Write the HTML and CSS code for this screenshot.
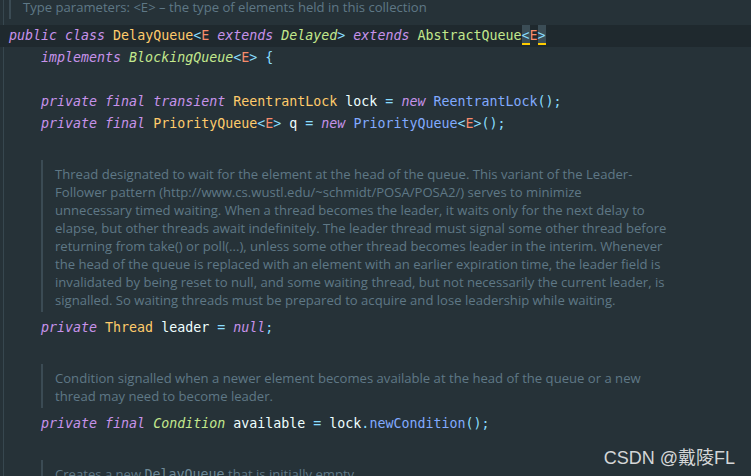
FILE: index.html
```html
<!DOCTYPE html>
<html>
<head>
	<title>DelayQueue.java</title>
	<meta charset="utf-8">
	<link rel="stylesheet" href="styles.css">
</head>
<body>
	<div class="editor">
		<!-- type parameter doc -->
		<div class="doc top">Type parameters: &lt;E&gt; – the type of elements held in this collection</div>

		<div class="line current"><span class="kw">public</span> <span class="kw">class</span> <span class="ty">DelayQueue</span><span class="pu">&lt;</span><span class="tp">E</span> <span class="kw">extends</span> <span class="ifc">Delayed</span><span class="pu">&gt;</span> <span class="kw">extends</span> <span class="cls">AbstractQueue</span><span class="pu match">&lt;</span><span class="tp">E</span><span class="pu match">&gt;</span></div>
		<div class="line">    <span class="kw">implements</span> <span class="ifc">BlockingQueue</span><span class="pu">&lt;</span><span class="tp">E</span><span class="pu">&gt;</span> <span class="pu">{</span></div>
		<div class="line"></div>
		<div class="line">    <span class="kw">private</span> <span class="kw">final</span> <span class="kw">transient</span> <span class="ty">ReentrantLock</span> <span class="id">lock</span> <span class="pu">=</span> <span class="kw">new</span> <span class="fn">ReentrantLock</span><span class="pu">();</span></div>
		<div class="line">    <span class="kw">private</span> <span class="kw">final</span> <span class="ty">PriorityQueue</span><span class="pu">&lt;</span><span class="tp">E</span><span class="pu">&gt;</span> <span class="id">q</span> <span class="pu">=</span> <span class="kw">new</span> <span class="fn">PriorityQueue</span><span class="pu">&lt;</span><span class="tp">E</span><span class="pu">&gt;();</span></div>

		<div class="doc">Thread designated to wait for the element at the head of the queue. This variant of the Leader-<br>
			Follower pattern (http://www.cs.wustl.edu/~schmidt/POSA/POSA2/) serves to minimize<br>
			unnecessary timed waiting. When a thread becomes the leader, it waits only for the next delay to<br>
			elapse, but other threads await indefinitely. The leader thread must signal some other thread before<br>
			returning from take() or poll(...), unless some other thread becomes leader in the interim. Whenever<br>
			the head of the queue is replaced with an element with an earlier expiration time, the leader field is<br>
			invalidated by being reset to null, and some waiting thread, but not necessarily the current leader, is<br>
			signalled. So waiting threads must be prepared to acquire and lose leadership while waiting.</div>
		<div class="line">    <span class="kw">private</span> <span class="ty">Thread</span> <span class="id">leader</span> <span class="pu">=</span> <span class="kw">null</span><span class="pu">;</span></div>

		<div class="doc">Condition signalled when a newer element becomes available at the head of the queue or a new<br>
			thread may need to become leader.</div>
		<div class="line">    <span class="kw">private</span> <span class="kw">final</span> <span class="ifc">Condition</span> <span class="id">available</span> <span class="pu">=</span> <span class="id">lock</span><span class="pu">.</span><span class="fn">newCondition</span><span class="pu">();</span></div>

		<div class="doc">Creates a new <code>DelayQueue</code> that is initially empty.</div>
	</div>

	<div class="watermark">CSDN @戴陵FL</div>
</body>
</html>
```

FILE: styles.css
```css
/* Editor background */
body {
  margin: 0;
  background-color: #263238;
  height: 476px;
  overflow: hidden;
  position: relative;
}

.editor {
  border-left: 1px solid #37474f;
  margin-left: 3px;
  min-height: 476px;
}

/* Code lines */
.line {
  height: 22px;
  line-height: 22px;
  padding-left: 5px;
  white-space: pre;
  font-family: "DejaVu Sans Mono", monospace;
  font-size: 13.3px;
  color: #eeffff;
}

.current {
  background-color: #1f292e;
  margin-left: -4px;
  padding-left: 9px;
}

.kw  { color: #c792ea; font-style: italic; }
.ty  { color: #ffcb6b; }
.tp  { color: #f78c6c; }
.pu  { color: #89ddff; }
.ifc { color: #c3e88d; font-style: italic; }
.cls { color: #c3e88d; }
.fn  { color: #82aaff; }
.id  { color: #eeffff; }

/* Brace match boxes */
.match {
  display: inline-block;
  height: 22px;
  background: linear-gradient(#3b4d56 0 18px, #ffcc00 18px 20px, transparent 20px);
}

/* Rendered doc comments */
.doc {
  margin: 25px 0 5px 37px;
  padding: 5px 0 3px 12px;
  border-left: 2px solid #3b4b54;
  font-family: "Open Sans", sans-serif;
  font-size: 13.1px;
  line-height: 18px;
  color: #5f7886;
  white-space: nowrap;
}

.doc.top {
  margin: -2px 0 6px 5px;
  padding: 0 0 3px 12px;
}

.doc code {
  font-family: "DejaVu Sans Mono", monospace;
  font-size: 13.3px;
  color: #6d8896;
}

/* CSDN watermark */
.watermark {
  position: absolute;
  right: 16px;
  bottom: 7px;
  font-family: "Liberation Sans", "Noto Sans CJK SC", sans-serif;
  font-size: 18px;
  color: #d4d6d7;
}
```
